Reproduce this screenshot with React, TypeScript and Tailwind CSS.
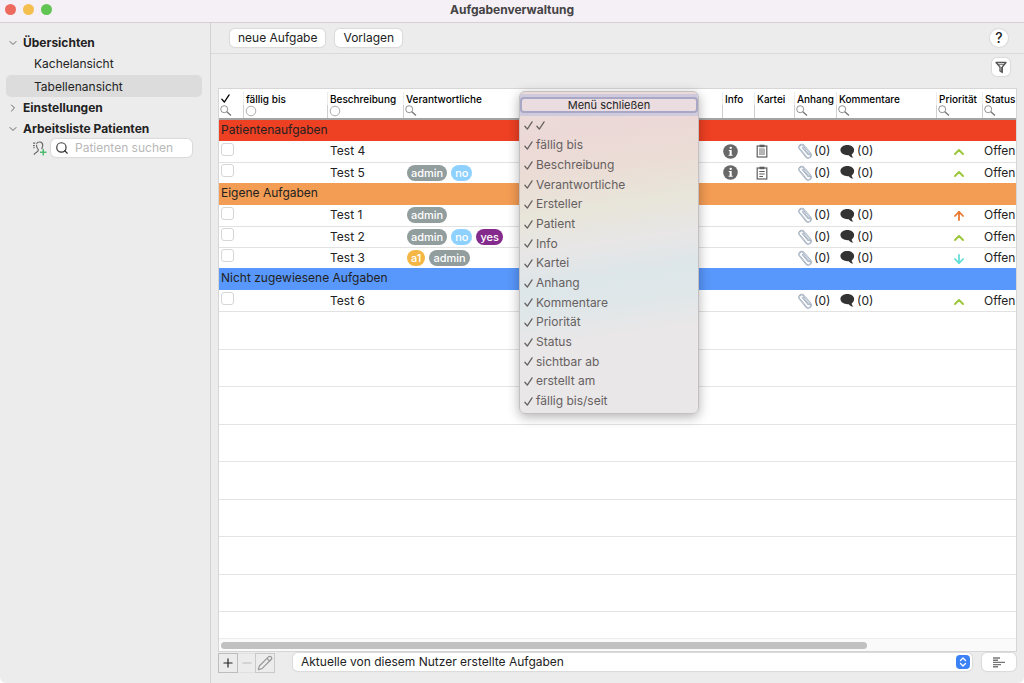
import React from "react";
import { ArrowDown, ArrowUp, ChevronDown, ChevronRight, ChevronUp, ChevronsUpDown, Minus, Pencil, Plus, Search } from "lucide-react";

type Tag = "admin" | "no" | "yes" | "a1";
type Priority = "low" | "mid" | "high";
type Task = { name: string; tags: Tag[]; priority: Priority; record?: "filled" | "lines" };
type Group = { title: string; color: string; tasks: Task[] };

const groups: Group[] = [
  {
    title: "Patientenaufgaben",
    color: "bg-[#ee4023]",
    tasks: [
      { name: "Test 4", tags: [], priority: "mid", record: "filled" },
      { name: "Test 5", tags: ["admin", "no"], priority: "mid", record: "lines" },
    ],
  },
  {
    title: "Eigene Aufgaben",
    color: "bg-[#f39c54]",
    tasks: [
      { name: "Test 1", tags: ["admin"], priority: "high" },
      { name: "Test 2", tags: ["admin", "no", "yes"], priority: "mid" },
      { name: "Test 3", tags: ["a1", "admin"], priority: "low" },
    ],
  },
  {
    title: "Nicht zugewiesene Aufgaben",
    color: "bg-[#5897fb]",
    tasks: [{ name: "Test 6", tags: [], priority: "mid" }],
  },
];

const tagColors: Record<Tag, string> = {
  admin: "bg-[#929d9d]",
  no: "bg-[#8ed1ff]",
  yes: "bg-[#842a8c]",
  a1: "bg-[#f4b745]",
};

const menuItems = [
  "", "fällig bis", "Beschreibung", "Verantwortliche", "Ersteller", "Patient", "Info", "Kartei",
  "Anhang", "Kommentare", "Priorität", "Status", "sichtbar ab", "erstellt am", "fällig bis/seit",
];

type Column = { label: string; width: string; filter?: "search" | "circle"; plain?: boolean };

const columns: Column[] = [
  { label: "✓", width: "w-6", filter: "search", plain: true },
  { label: "fällig bis", width: "w-[84px]", filter: "circle" },
  { label: "Beschreibung", width: "w-[76px]", filter: "circle" },
  { label: "Verantwortliche", width: "w-[118px]", filter: "search" },
  { label: "", width: "w-auto", plain: true },
  { label: "Info", width: "w-8" },
  { label: "Kartei", width: "w-10" },
  { label: "Anhang", width: "w-[42px]", filter: "search" },
  { label: "Kommentare", width: "w-[100px]", filter: "search" },
  { label: "Priorität", width: "w-[46px]", filter: "search" },
  { label: "Status", width: "w-[34px]", filter: "search" },
];

function CheckMark() {
  return (
    <svg viewBox="0 0 10 10" className="block size-[9px] shrink-0" fill="none" stroke="currentColor" strokeWidth="1.4" strokeLinecap="round" strokeLinejoin="round" aria-hidden="true">
      <path d="M1 5.8 3.7 9 9 1" />
    </svg>
  );
}

function FilterGlyph({ kind }: { kind?: "search" | "circle" }) {
  if (!kind) return null;
  return (
    <svg viewBox="0 0 12 12" className="block size-3" fill="none" stroke="#777" strokeWidth="0.8" aria-hidden="true">
      {kind === "search" ? (
        <>
          <circle cx="4.2" cy="4.2" r="3.5" />
          <path d="M6.8 6.8 11 10.6" strokeWidth="1.3" />
        </>
      ) : (
        <circle cx="6" cy="6" r="4.8" stroke="#999" />
      )}
    </svg>
  );
}

const CLIP_PATH = "M5.6 4.6 11 10.9c1 1.2 2.6-.1 1.6-1.3L6.3 2.3C4.400 .1 .8 3.500 2.600 5.900l6.600 8.100c2.300 2.500 6.400-.6 4.300-3.500L8.500 4.500";

function PaperClip() {
  return (
    <svg viewBox="0 0 16 16" className="size-4 shrink-0" fill="none" strokeLinecap="round" strokeLinejoin="round" aria-hidden="true">
      <path d={CLIP_PATH} stroke="#8b99ad" strokeWidth="1.5" />
      <path d={CLIP_PATH} stroke="#e0e6ee" strokeWidth="0.7" />
    </svg>
  );
}

function Bubble() {
  return (
    <svg viewBox="0 0 14 14" className="size-[15px] shrink-0" aria-hidden="true">
      <path d="M6.800 .9c3.700 0 6.400 2 6.400 4.800 0 1.700-.9 3.100-2.300 4 .1 1.200 .8 2.200 1.600 3-1.900-.1-3.300-.9-4.300-2.200C4 10.900 .4 8.800 .4 5.700 .4 2.900 3.100 .9 6.800 .9Z" fill="#333" />
    </svg>
  );
}

function InfoIcon() {
  return (
    <svg viewBox="0 0 14 14" className="size-[15px]" aria-hidden="true">
      <circle cx="7" cy="7" r="6.800" fill="#686868" />
      <circle cx="7.200" cy="3.600" r="1.100" fill="#fff" />
      <path d="M5.400 5.600h2.700v4.400h.9v.9H5.200V10h1V6.500h-.8Z" fill="#fff" />
    </svg>
  );
}

function Clipboard({ filled }: { filled: boolean }) {
  return (
    <svg viewBox="0 0 12 14" className="h-3.5 w-3" fill="none" stroke="#5e5e5e" aria-hidden="true">
      <rect x="1.2" y="2" width="9.6" height="11" strokeWidth="1.2" />
      <rect x="3.5" y="0.7" width="5" height="2.5" fill="#5e5e5e" stroke="none" />
      {filled ? <rect x="3.3" y="4.8" width="5.4" height="6" fill="#b5b5b5" stroke="#999" strokeWidth="0.5" /> : <path d="M3.3 5.500h5.400M3.300 8h5.400M3.300 10.500h3.700" />}
    </svg>
  );
}

function PriorityIcon({ level }: { level: Priority }) {
  if (level === "high") return <ArrowUp className="size-3.5 text-[#e8762c]" strokeWidth={3} />;
  if (level === "low") return <ArrowDown className="size-3.5 text-[#62dcd6]" strokeWidth={3} />;
  return <ChevronUp className="size-4 text-[#9bc83c]" strokeWidth={3} />;
}

function Sidebar() {
  return (
    <nav className="flex w-[211px] shrink-0 flex-col border-r border-[#d2d2d2] pt-[9px] pr-2 pl-1.5 text-xs">
      <button className="flex h-[21px] items-center gap-1 pl-0.5 text-left font-bold">
        <ChevronDown className="-ml-px size-3 shrink-0 text-[#666]" />
        Übersichten
      </button>
      <a href="#kacheln" className="flex h-[22px] items-center pl-7">Kachelansicht</a>
      <a href="#tabelle" className="flex h-[22px] items-center rounded-[5px] bg-[#dcdcdc] pt-0.5 pl-7" aria-current="page">Tabellenansicht</a>
      <button className="flex h-[21px] items-center gap-1 pl-0.5 text-left font-bold">
        <ChevronRight className="-ml-px size-3 shrink-0 text-[#666]" />
        Einstellungen
      </button>
      <button className="flex h-[21px] items-center gap-1 pl-0.5 text-left font-bold">
        <ChevronDown className="-ml-px size-3 shrink-0 text-[#666]" />
        Arbeitsliste Patienten
      </button>
      <div className="flex items-center gap-1 pr-2.5 pl-[26px]">
        <button aria-label="Patient hinzufügen">
          <svg viewBox="0 0 14 14" className="block size-[15px]" fill="none" aria-hidden="true">
            <path d="M1 2h2M1 4.300h1.600M1.200 6.300h1.300" stroke="#666" />
            <path d="M4.200 2.600C5.200 .3 9.800 .2 10 3.600c.1 2-.8 2.700-.8 3.900M4.300 3.500c-.6 2.500 .5 3.600 1.600 4.600 .3 2.300-2.500 2-4.100 4.600" stroke="#666" strokeWidth="1.1" />
            <path d="M10.500 7.500v6M7.500 10.500h6" stroke="#4fba6f" strokeWidth="1.4" />
          </svg>
        </button>
        <label className="flex h-[18px] min-w-0 flex-1 items-center gap-1.5 rounded-[5px] bg-white px-1 shadow-[0_0_1px_1px_rgba(0,0,0,0.08)]">
          <Search className="size-3.5 shrink-0 text-[#333]" />
          <input aria-label="Patienten suchen" placeholder="Patienten suchen" className="w-full min-w-0 bg-transparent outline-none placeholder:text-[#b8b8b8]" />
        </label>
      </div>
    </nav>
  );
}

function TaskTable() {
  return (
    <table className="w-full table-fixed border-collapse text-left text-xs whitespace-nowrap">
      <thead>
        <tr className="h-[30px] border-b-2 border-[#a3a3a3] text-[10px] text-black">
          {columns.map((c, i) => (
            <th key={i} className={`${c.width} p-0 align-top font-medium`}>
              <div className="flex h-[29px] flex-col pt-[3px]">
                <span className={`flex h-[13px] items-center pl-0.5 leading-3 ${c.plain ? "" : "border-l border-[#ececec]"}`}>
                  {c.label === "✓" ? <CheckMark /> : c.label}
                </span>
                <span className={`block h-[13px] pl-px ${c.plain ? "" : "border-l border-[#cfcfcf]"}`}>
                  <FilterGlyph kind={c.filter} />
                </span>
              </div>
            </th>
          ))}
        </tr>
      </thead>
      {groups.map((g) => (
        <tbody key={g.title}>
          <tr className={`h-[22px] ${g.color}`}>
            <th colSpan={11} className="p-0 pb-0.5 pl-0.5 font-normal">{g.title}</th>
          </tr>
          {g.tasks.map((t) => (
            <tr key={t.name} className="h-[21px] border-b border-[#e2e2e2] last:border-b-0">
              <td className="p-0 pl-0.5">
                <input type="checkbox" aria-label={`${t.name} erledigt`} className="mb-1 block size-[13px] appearance-none rounded-[3px] border border-[#d6d6d6] bg-white" />
              </td>
              <td className="p-0" />
              <td className="p-0 pl-[3px]">{t.name}</td>
              <td className="p-0 pl-1">
                <div className="flex gap-1">
                  {t.tags.map((tag) => (
                    <span key={tag} className={`h-4 rounded-full px-1 text-[11px] leading-4 font-medium text-white ${tagColors[tag]}`}>{tag}</span>
                  ))}
                </div>
              </td>
              <td className="p-0" />
              <td className="p-0 pl-px">{t.record && <InfoIcon />}</td>
              <td className="p-0 pl-0.5">{t.record && <Clipboard filled={t.record === "filled"} />}</td>
              <td className="p-0 pl-[3px]">
                <div className="flex items-center gap-px"><PaperClip />(0)</div>
              </td>
              <td className="p-0 pl-1">
                <div className="flex items-center gap-0.5"><Bubble />(0)</div>
              </td>
              <td className="p-0 pt-0.5">
                <div className="flex justify-center"><PriorityIcon level={t.priority} /></div>
              </td>
              <td className="p-0 pl-0.5">Offen</td>
            </tr>
          ))}
        </tbody>
      ))}
    </table>
  );
}

function ColumnMenu() {
  return (
    <div role="menu" className="absolute top-0.5 left-[300px] w-[180px] rounded-md border border-[#c4c0c1] bg-[linear-gradient(172deg,#e9dcda_0%,#ecd9d7_14%,#ebdcd6_24%,#e8e5d9_36%,#e8e6e6_47%,#dde6e9_57%,#dfe7e9_64%,#e9e7e8_74%)] pt-0.5 pb-0.5 text-xs text-[#666060] shadow-[0_3px_12px_rgba(0,0,0,0.3)]">
      <div className="bg-[#cfcbdd] py-[3px]">
        <button className="block h-4 w-full rounded-[4px] border-2 border-[#a9a7c6] bg-[#eadcdf] text-center text-[11px] leading-3 text-[#222]">
          Menü schließen
        </button>
      </div>
      <div className="grid h-[295px] auto-rows-fr">
        {menuItems.map((item, i) => (
          <button key={i} role="menuitemcheckbox" aria-checked="true" aria-label={item || "Erledigt"} className="flex items-center gap-[3px] pl-1 text-left">
            <CheckMark />
            {item || <CheckMark />}
          </button>
        ))}
      </div>
    </div>
  );
}

export default function App() {
  return (
    <div className="flex h-screen flex-col overflow-hidden rounded-b-md bg-[#ececec] font-[Inter,sans-serif] text-xs text-[#222]">
      <header className="relative flex h-[23px] shrink-0 items-center border-b border-[#d4d0d4] bg-[#f5eff6] pb-[3px]">
        <div className="absolute left-[5px] flex gap-[7px]">
          <button aria-label="Schließen" className="size-[11px] rounded-full bg-[#ed6a5e]" />
          <button aria-label="Minimieren" className="size-[11px] rounded-full bg-[#f5bf4f]" />
          <button aria-label="Vergrößern" className="size-[11px] rounded-full bg-[#61c554]" />
        </div>
        <h1 className="w-full text-center font-bold text-[#444]">Aufgabenverwaltung</h1>
      </header>
      <div className="flex min-h-0 flex-1">
        <Sidebar />
        <main className="flex min-w-0 flex-1 flex-col">
          <div className="flex h-[31px] shrink-0 items-center gap-2.5 border-b border-[#dadada] pr-4 pl-[19px]">
            <button className="h-[18px] rounded-[5px] bg-white px-2 shadow-[0_0_1px_1px_rgba(0,0,0,0.08)]">neue Aufgabe</button>
            <button className="h-[18px] rounded-[5px] bg-white px-2 shadow-[0_0_1px_1px_rgba(0,0,0,0.08)]">Vorlagen</button>
            <button aria-label="Hilfe" className="ml-auto size-[18px] rounded-full bg-white text-sm leading-none font-medium shadow-[0_0_1px_1px_rgba(0,0,0,0.08)]">?</button>
          </div>
          <div className="flex h-[34px] shrink-0 items-center justify-end pr-3.5 pb-2">
            <button aria-label="Filter" className="flex size-[18px] items-center justify-center rounded-[5px] bg-white shadow-[0_0_1px_1px_rgba(0,0,0,0.08)]">
              <svg viewBox="0 0 12 13" className="h-[13px] w-3" aria-hidden="true">
                <path d="M1 1.500h10L7.300 6v5.500L5 10V6Z" fill="none" stroke="#555" strokeWidth="1.3" strokeLinejoin="round" />
                <path d="M6.200 6h1V11L6.200 10.200Z" fill="#555" />
                <path d="M3 3.600h6" stroke="#555" strokeWidth="0.8" />
              </svg>
            </button>
          </div>
          <section className="relative mx-[7px] flex min-h-0 flex-1 flex-col border border-[#d6d6d6] bg-white">
            <TaskTable />
            <div className="min-h-0 flex-1 overflow-hidden border-t border-[#e2e2e2]" aria-hidden="true">
              {Array.from({ length: 8 }, (_, i) => (
                <div key={i} className="border-b border-[#e4e4e4] odd:h-[38px] even:h-[37px]" />
              ))}
            </div>
            <div className="flex h-[13px] shrink-0 items-center border-t border-[#ececec] bg-[#fafafa] px-0.5">
              <div className="h-[7px] w-[81.5%] rounded-full bg-[#c1c1c1]" />
            </div>
            <ColumnMenu />
          </section>
          <footer className="flex h-[31px] shrink-0 items-start pt-px pr-2 pl-[7px]">
            <button aria-label="Hinzufügen" className="flex size-5 items-center justify-center border border-[#bdbdbd]"><Plus className="size-3.5" /></button>
            <button aria-label="Entfernen" className="flex h-5 w-[17px] items-center justify-center border-y border-[#e0e0e0] text-[#bbb]"><Minus className="size-3.5" /></button>
            <button aria-label="Bearbeiten" className="flex size-5 items-center justify-center border border-[#c9c9c9] text-[#999]"><Pencil className="size-4" strokeWidth={1.8} /></button>
            <div className="relative ml-[18px] flex min-w-0 flex-1">
              <select aria-label="Ansicht" className="h-[18px] w-full appearance-none rounded-[5px] bg-white pl-2 shadow-[0_0_1px_1px_rgba(0,0,0,0.08)]">
                <option>Aktuelle von diesem Nutzer erstellte Aufgaben</option>
              </select>
              <span className="pointer-events-none absolute top-0.5 right-0.5 flex size-3.5 items-center justify-center rounded-[4px] bg-[#3b82f7] text-white">
                <ChevronsUpDown className="size-3" strokeWidth={2.5} />
              </span>
            </div>
            <button aria-label="Details" className="ml-2.5 flex h-[18px] w-[34px] items-center justify-center rounded-[5px] bg-white shadow-[0_0_1px_1px_rgba(0,0,0,0.08)]">
              <svg viewBox="0 0 12 11" className="h-[11px] w-3" stroke="#777" strokeWidth="1.4" aria-hidden="true">
                <path d="M0 1h7M0 3.200h5M0 5.400h12M0 7.600h8M0 9.800h5" />
              </svg>
            </button>
          </footer>
        </main>
      </div>
    </div>
  );
}
